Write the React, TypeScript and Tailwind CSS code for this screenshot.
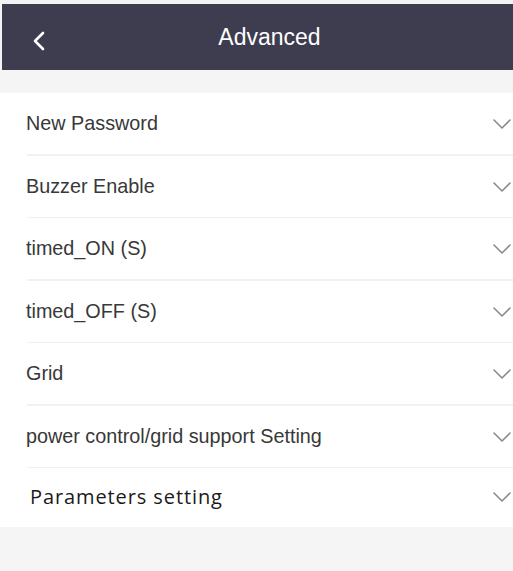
import React from "react";

const items = [
  "New Password",
  "Buzzer Enable",
  "timed_ON (S)",
  "timed_OFF (S)",
  "Grid",
  "power control/grid support Setting",
];

function Chevron() {
  return (
    <svg width="18" height="10" viewBox="0 0 18 10" fill="none" className="shrink-0">
      <path d="M1 1 L9 9 L17 1" stroke="#8a8a8a" strokeWidth="1.6" strokeLinecap="round" strokeLinejoin="round" />
    </svg>
  );
}

export default function App() {
  return (
    <div className="w-[513px] h-[571px] bg-[#f5f5f5] overflow-hidden" style={{ fontFamily: '"Liberation Sans", Arial, sans-serif' }}>
      <div className="h-[4px] bg-[#f2f2f2]" />
      <div className="ml-[2px] h-[66px] bg-[#3d3d4f] relative flex items-center justify-center">
        <svg width="14" height="20" viewBox="0 0 14 20" fill="none" className="absolute left-[30px] top-[27px]">
          <path d="M11 2 L3 10 L11 18" stroke="#ffffff" strokeWidth="2.6" strokeLinecap="round" strokeLinejoin="round" />
        </svg>
        <span className="text-white text-[23px] ml-[24px] leading-none">Advanced</span>
      </div>
      <div className="h-[23px]" />
      <div className="bg-white">
        {items.map((t) => (
          <div key={t} className="h-[62.5px] flex items-center pl-[26px] pr-[2px] relative">
            <span className="text-[#383838] text-[19.8px] flex-1">{t}</span>
            <Chevron />
            <div className="absolute left-[27px] right-0 bottom-0 h-[1.5px] bg-[#f1f1f1]" />
          </div>
        ))}
        <div className="h-[59px] pb-[2px] flex items-center pl-[30px] pr-[2px]">
          <span
            className="text-[#1a1a1a] text-[20px] tracking-[0.9px] flex-1"
            style={{ fontFamily: '"Open Sans", sans-serif' }}
          >
            Parameters setting
          </span>
          <Chevron />
        </div>
      </div>
    </div>
  );
}
